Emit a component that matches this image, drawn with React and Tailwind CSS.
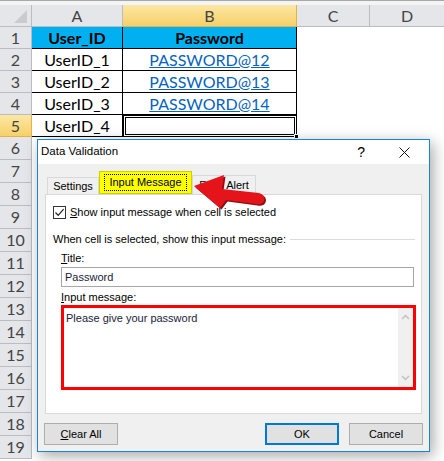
import React from 'react'

const rows = [
    { a: 'User_ID', b: 'Password', head: true },
    { a: 'UserID_1', b: 'PASSWORD@12' },
    { a: 'UserID_2', b: 'PASSWORD@13' },
    { a: 'UserID_3', b: 'PASSWORD@14' },
    { a: 'UserID_4', b: '', selected: true },
]

function Sheet() {
    const all = Array.from({ length: 19 }, (_, i) => i + 1)
    return (
        <div className="font-['Lato',sans-serif]">
            <div className="h-[5px] border-t border-[#a8a8a8] bg-[#f4f4f4]"></div>
            {/* column headers */}
            <div className="flex h-[22px] text-[16px] text-[#444]">
                <div className="relative w-[32px] bg-[#e4e6ea] border-r border-b border-[#b9bcc1]">
                    <div className="absolute right-[4px] bottom-[3px] w-0 h-0 border-l-[13px] border-l-transparent border-b-[13px] border-b-[#c9cbcf]"></div>
                </div>
                <div className="w-[91px] bg-[#e4e6ea] border-r border-b border-[#b9bcc1] flex items-center justify-center">A</div>
                <div className="w-[174px] bg-linear-to-b from-[#fce7a2] to-[#f7d168] border-r border-b border-[#e2b24c] flex items-center justify-center">B</div>
                <div className="w-[73px] bg-[#e4e6ea] border-r border-b border-[#b9bcc1] flex items-center justify-center">C</div>
                <div className="flex-1 bg-[#e4e6ea] border-b border-[#b9bcc1] flex items-center justify-center">D</div>
            </div>
            {all.map((n) => {
                const r = rows[n - 1]
                const h = n <= 5 ? 'h-[22px]' : 'h-[23px]'
                return (
                    <div key={n} className={`flex ${h} text-[16px]`}>
                        <div className={n === 5
                            ? 'w-[32px] bg-linear-to-b from-[#fce7a2] to-[#f7d168] border-r border-b border-[#e2b24c] flex items-center justify-center text-[#444]'
                            : 'w-[32px] bg-[#e4e6ea] border-r border-b border-[#b9bcc1] flex items-center justify-center text-[#444]'}>
                            {n}
                        </div>
                        {r ? (
                            <>
                                <div className={r.head
                                    ? 'w-[91px] bg-[#00b0f0] border-r border-b border-black flex items-center justify-center font-bold text-black'
                                    : 'w-[91px] border-r border-b border-black flex items-center justify-center text-black'}>
                                    {r.a}
                                </div>
                                {r.selected ? (
                                    <div className="relative w-[174px] border border-black shadow-[inset_0_0_0_1px_#fff,inset_0_0_0_2px_#000]">
                                        <div className="absolute -right-[3px] -bottom-[3px] w-[5px] h-[5px] bg-black border border-white"></div>
                                    </div>
                                ) : (
                                    <div className={r.head
                                        ? 'w-[174px] bg-[#00b0f0] border-r border-b border-black flex items-center justify-center font-bold text-black'
                                        : 'w-[174px] border-r border-b border-black flex items-center justify-center text-[#0563c1] underline'}>
                                        {r.b}
                                    </div>
                                )}
                            </>
                        ) : null}
                    </div>
                )
            })}
        </div>
    )
}

function Tab({ children, className }) {
    return <div className={className}>{children}</div>
}

function Dialog() {
    return (
        <div className="absolute left-[37px] top-[139px] w-[393px] h-[313px] border border-[#1883d7] bg-[#f0f0f0] shadow-[3px_4px_14px_rgba(0,0,0,0.35)] flex flex-col font-['Liberation_Sans',sans-serif] text-[11px] text-black">
            <div className="h-[24px] bg-white flex items-center pl-[3px]">
                <span className="text-[11.5px]">Data Validation</span>
                <span className="ml-auto mr-[34px] text-[14px]">?</span>
                <svg width="11" height="11" viewBox="0 0 11 11" className="mr-[19px]">
                    <path d="M0.5 0.5 L10.5 10.5 M10.5 0.5 L0.5 10.5" stroke="#111" strokeWidth="1" />
                </svg>
            </div>
            <div className="px-[7px]">
                <div className="flex items-end h-[30px] pl-[2px]">
                    <Tab className="h-[17px] w-[52px] border border-b-0 border-[#d9d9d9] bg-[#f0f0f0] flex items-center justify-center">Settings</Tab>
                    <Tab className="h-[23px] w-[93px] bg-[#ffff00] border border-[#cfcf00] flex items-center justify-center">
                        <span className="border border-dotted border-black px-[4px] leading-[15px]">Input Message</span>
                    </Tab>
                    <Tab className="h-[19px] w-[64px] border border-b-0 border-[#d9d9d9] bg-[#f0f0f0] flex items-center justify-center">Error Alert</Tab>
                </div>
                <div className="h-[220px] bg-white border border-[#d9d9d9] pt-[10px] pl-[7px] pr-[6px]">
                    <div className="flex items-center h-[14px] gap-[4px]">
                        <div className="w-[13px] h-[13px] border border-[#333] bg-white flex items-center justify-center">
                            <svg width="11" height="11" viewBox="0 0 11 11">
                                <path d="M1.5 5.5 L4.2 8.3 L9.6 2.2" fill="none" stroke="#222" strokeWidth="1.2" />
                            </svg>
                        </div>
                        <span><span className="underline">S</span>how input message when cell is selected</span>
                    </div>
                    <div className="flex items-center h-[14px] mt-[13px] gap-[4px]">
                        <span>When cell is selected, show this input message:</span>
                        <div className="flex-1 h-px bg-[#dcdcdc]"></div>
                    </div>
                    <div className="ml-[8px]">
                        <div className="h-[14px] mt-[5px] flex items-center"><span><span className="underline">T</span>itle:</span></div>
                        <div className="mt-[2px] w-[353px] h-[20px] border border-[#a6a6a6] bg-white flex items-center pl-[3px] text-[#1b1b3a]">Password</div>
                        <div className="h-[14px] mt-[3px] flex items-center"><span><span className="underline">I</span>nput message:</span></div>
                        <div className="mt-[1px] w-[355px] h-[85px] border-[3px] border-[#ff0000] bg-white flex">
                            <div className="flex-1 pl-[2px] pt-[2px] text-[#1b1b3a]">Please give your password</div>
                            <div className="w-[15px] bg-[#f0f0f0] flex flex-col items-center justify-between py-[6px]">
                                <svg width="9" height="6" viewBox="0 0 9 6"><path d="M1 5 L4.5 1.5 L8 5" fill="none" stroke="#c2c2c2" strokeWidth="1.5" /></svg>
                                <svg width="9" height="6" viewBox="0 0 9 6"><path d="M1 1 L4.5 4.5 L8 1" fill="none" stroke="#c2c2c2" strokeWidth="1.5" /></svg>
                            </div>
                        </div>
                    </div>
                </div>
                <div className="flex mt-[9px]">
                    <button className="w-[74px] h-[22px] -ml-[1px] bg-[#e1e1e1] border border-[#adadad]"><span className="underline">C</span>lear All</button>
                    <button className="ml-auto w-[74px] h-[22px] bg-[#e1e1e1] border-2 border-[#0078d7]">OK</button>
                    <button className="ml-[10px] -mr-[1px] w-[74px] h-[22px] bg-[#e1e1e1] border border-[#adadad]">Cancel</button>
                </div>
            </div>
        </div>
    )
}

function Arrow() {
    return (
        <svg className="absolute left-0 top-0 pointer-events-none" width="444" height="461" viewBox="0 0 444 461">
            <path d="M194,186 L224,175 L222,189 L259,193 Q266,195 264,201 Q262,205 256,204 L226,200 L220,208 Z" fill="#8f0d10" transform="translate(1.5,1.5)" />
            <path d="M194,186 L224,175 L222,189 L259,193 Q266,195 264,201 Q262,205 256,204 L226,200 L220,208 Z" fill="#e5141b" />
        </svg>
    )
}

export default function App() {
    return (
        <div className="relative w-[444px] h-[461px] overflow-hidden bg-white">
            <Sheet />
            <Dialog />
            <Arrow />
        </div>
    )
}
